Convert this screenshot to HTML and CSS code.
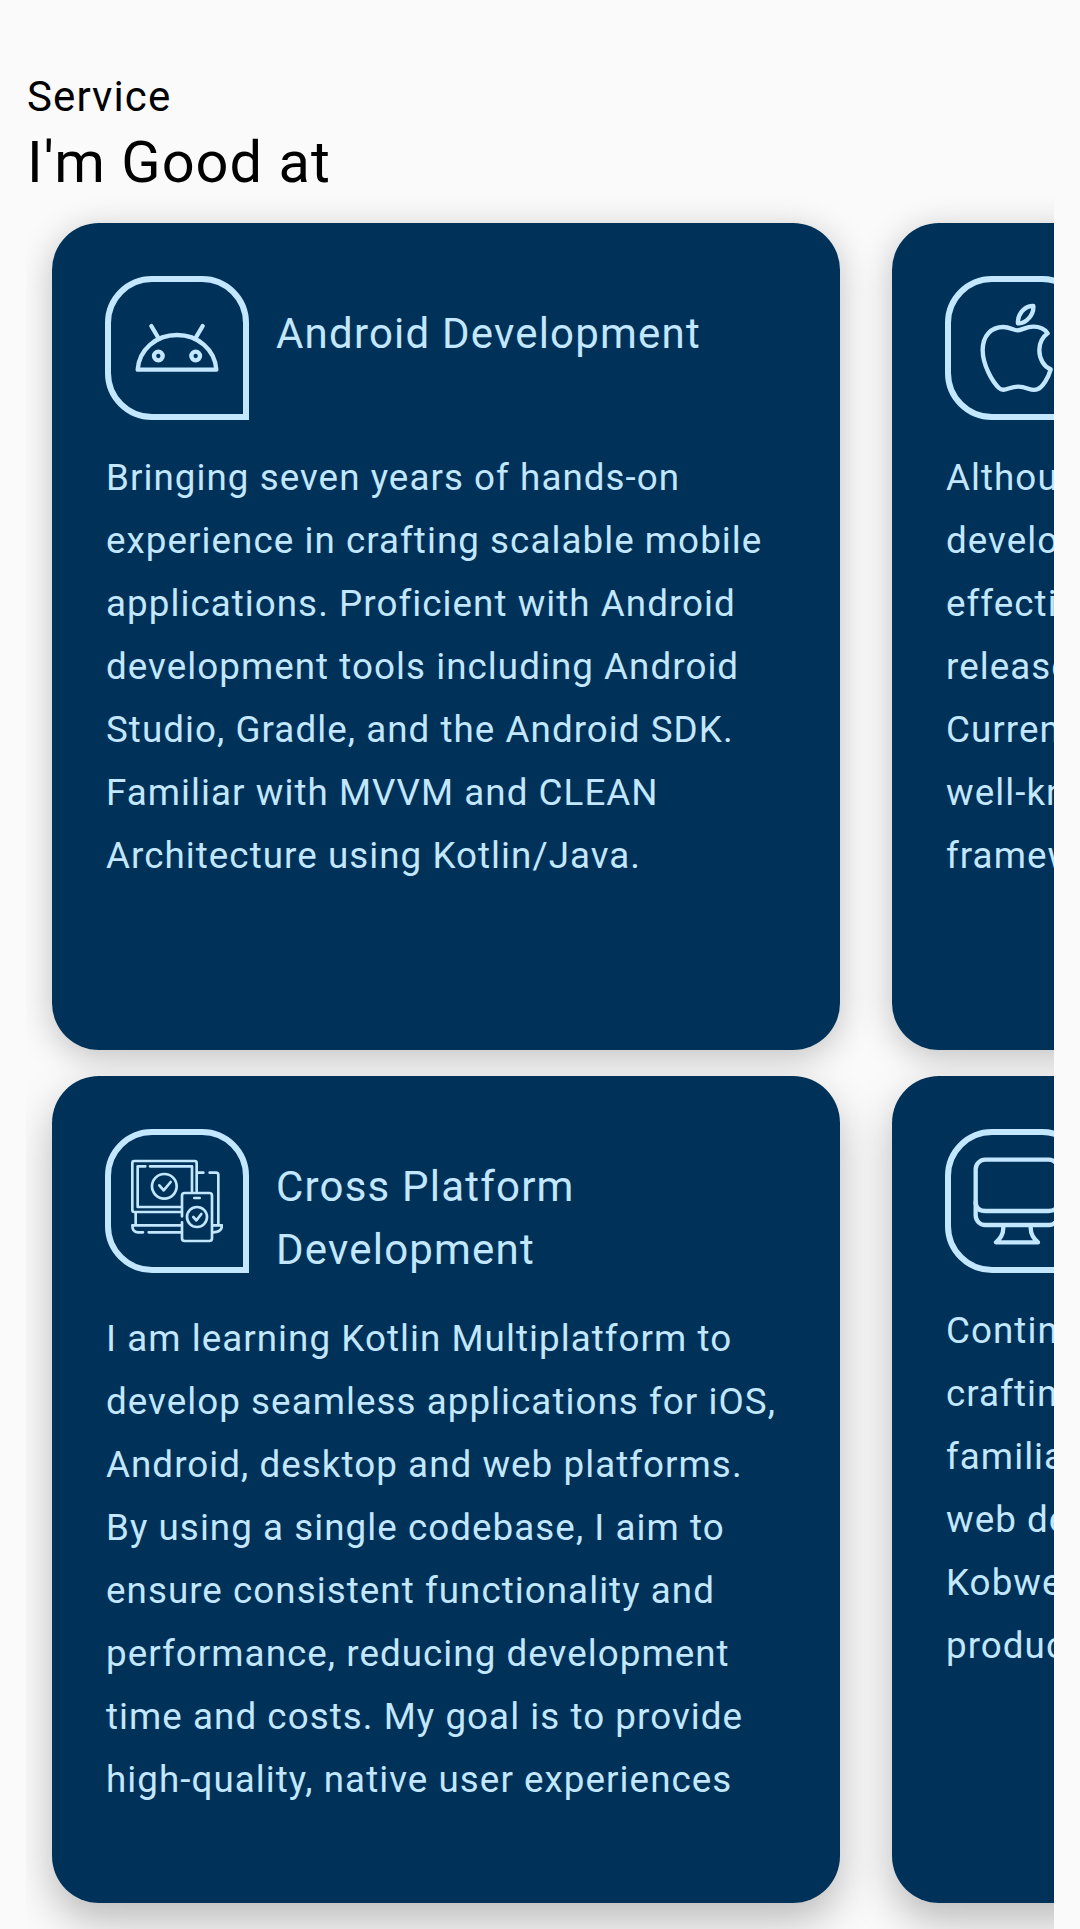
FILE: index.html
```html
<!DOCTYPE html>
<html lang="en">
<head>
<meta charset="utf-8">
<title>Service</title>
<link rel="stylesheet" href="styles.css">
</head>
<body>
<main class="page">
  <p class="eyebrow">Service</p>
  <h1 class="heading">I'm Good at</h1>
  <section class="services">
    <article class="card">
      <header class="card-head">
        <div class="badge">
          <svg class="icon" viewBox="0 0 276 276" stroke-width="13">
            <path d="M20 203C24 143 75 99 138 99S252 143 256 203Z"/>
            <path d="M61 72 84 111M215 72 192 111"/>
            <circle cx="82" cy="162" r="13"/><circle cx="194" cy="162" r="13"/>
          </svg>
        </div>
        <h2 class="card-title">Android Development</h2>
      </header>
      <p class="card-text">Bringing seven years of hands-on<br>experience in crafting scalable mobile<br>applications. Proficient with Android<br>development tools including Android<br>Studio, Gradle, and the Android SDK.<br>Familiar with MVVM and CLEAN<br>Architecture using Kotlin/Java.</p>
    </article>
    <article class="card">
      <header class="card-head">
        <div class="badge">
          <svg class="icon" viewBox="0 0 276 276" stroke-width="13">
            <path d="M139 85C128 85 116 75 97 75C60 75 35 102 35 144C35 190 65 240 84 258C98 272 114 254 142 254C170 254 181 270 199 262C215 255 232 228 239 202C219 194 205 171 205 144C205 122 215 105 230 94C220 79 200 74 187 74C165 74 152 85 139 85Z"/>
            <path d="M141 64C138 42 158 10 187 12C189 38 165 66 141 64Z"/>
          </svg>
        </div>
      </header>
      <p class="card-text">Although<br>developing<br>effectively<br>released<br>Currently<br>well-known<br>frameworks</p>
    </article>
    <article class="card card-low">
      <header class="card-head">
        <div class="badge">
          <svg class="icon" viewBox="0 0 276 276" stroke-width="8">
            <path d="M197 109V24q0-6-6-6H10q-6 0-6 6V165q0 6 6 6H150"/>
            <path d="M43 34H20V156H150M57 34H183V109"/>
            <circle cx="100" cy="94" r="37"/>
            <path d="M85 91 98 106 119 81"/>
            <path d="M153 184V122q0-8 8-8H235q8 0 8 8V250q0 8-8 8H161q-8 0-8-8V202"/>
            <path d="M190 129H206"/>
            <circle cx="198" cy="186" r="30"/>
            <path d="M187 186 196 196 211 177"/>
            <path d="M14 173V207M150 211H4C4 224 10 232 20 232H36M53 232H150"/>
            <path d="M202 53H217M236 53H255q7 0 7 7V208M246 211H273C273 224 265 232 246 232"/>
          </svg>
        </div>
        <h2 class="card-title">Cross Platform<br>Development</h2>
      </header>
      <p class="card-text">I am learning Kotlin Multiplatform to<br>develop seamless applications for iOS,<br>Android, desktop and web platforms.<br>By using a single codebase, I aim to<br>ensure consistent functionality and<br>performance, reducing development<br>time and costs. My goal is to provide<br>high-quality, native user experiences</p>
    </article>
    <article class="card card-low">
      <header class="card-head">
        <div class="badge">
          <svg class="icon" viewBox="0 0 276 276" stroke-width="13">
            <rect x="14" y="14" width="248" height="196" rx="29"/>
            <path d="M14 140Q14 168 44 168H232Q262 168 262 140"/>
            <path d="M97 215C98 240 86 252 75 262H201C190 252 178 240 179 215"/>
          </svg>
        </div>
      </header>
      <p class="card-text">Continuing<br>crafting<br>familiar<br>web development<br>Kobweb<br>products</p>
    </article>
  </section>
</main>
</body>
</html>
```

FILE: styles.css
```css
* {
  box-sizing: border-box;
}

body {
  margin: 0;
  background: #fafafa;
  color: #000;
  font-family: Roboto, sans-serif;
  font-weight: 400;
  overflow: hidden;
}

.page {
  height: 1929px;
  padding: 65px 26px 0;
  overflow: hidden;
}

.eyebrow,
.heading,
.card-title,
.card-text {
  margin: 0;
  padding-left: 1px;
  font-weight: 400;
  white-space: nowrap;
}

.eyebrow {
  font-size: 42px;
  line-height: 63px;
  letter-spacing: 1.1px;
}

.heading {
  font-size: 57.75px;
  line-height: 69px;
  letter-spacing: 1.02px;
}

.services {
  display: grid;
  grid-template-columns: 788px 788px;
  grid-auto-rows: 827px;
  gap: 26px 52px;
  margin-top: 26px;
  padding-left: 26px;
  overflow-x: clip;
  isolation: isolate;
}

.card {
  position: relative;
  padding: 53px;
  border-radius: 47px;
  background: #003259;
  color: #c2e7ff;
}

/* Shadows sit beneath every card, so neighbours never darken each other. */
.card::before {
  content: "";
  position: absolute;
  inset: 0;
  z-index: -1;
  border-radius: inherit;
  box-shadow: 0 7px 34px rgba(0, 0, 0, 0.23);
}

.card-low::before {
  box-shadow: 0 18px 40px rgba(0, 0, 0, 0.25);
}

.card-head {
  display: flex;
  align-items: flex-start;
  gap: 26px;
}

.badge {
  display: grid;
  place-items: center;
  flex: none;
  width: 144px;
  height: 144px;
  border: 6px solid #c2e7ff;
  border-radius: 47px 47px 0 47px;
}

.icon {
  width: 92px;
  height: 92px;
  fill: none;
  stroke: #c2e7ff;
  stroke-linecap: round;
  stroke-linejoin: round;
}

.card-title {
  padding-top: 26px;
  font-size: 42px;
  line-height: 63px;
  letter-spacing: 1.2px;
}

.card-text {
  margin-top: 26px;
  font-size: 36.75px;
  line-height: 63px;
  letter-spacing: 1.05px;
}
```
